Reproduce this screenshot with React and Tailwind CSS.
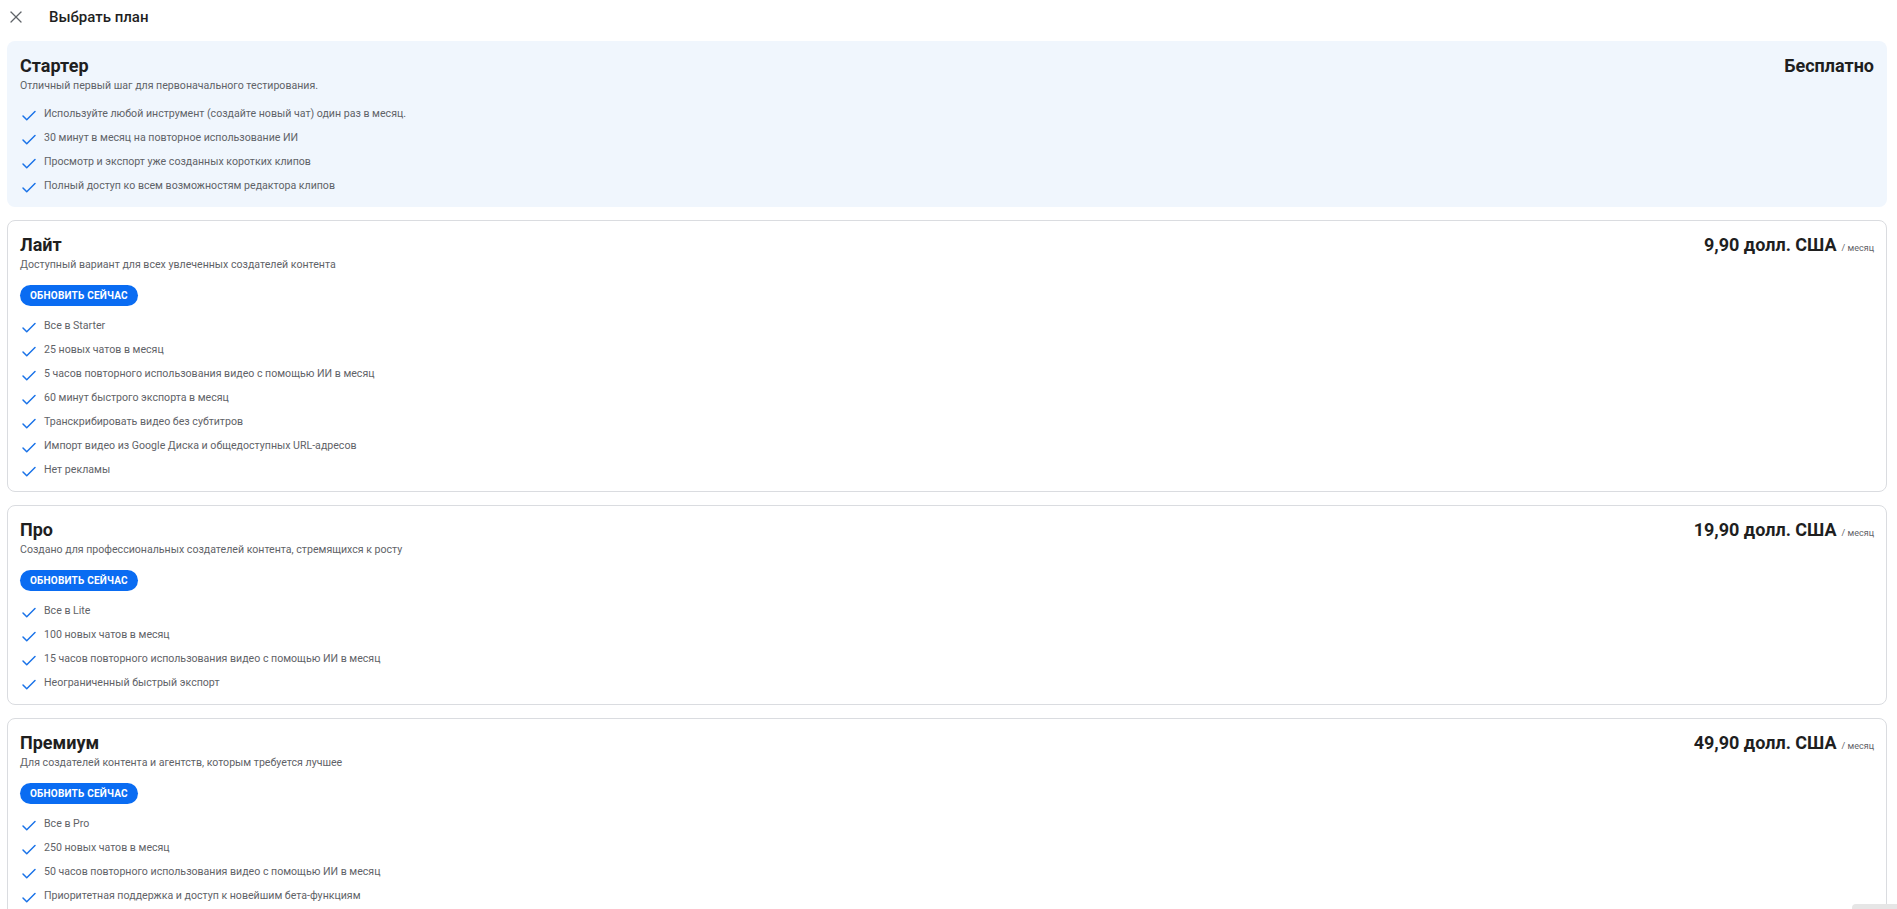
import React from 'react';
import { Check, X } from 'lucide-react';

const plans = [
    {
        name: 'Стартер',
        desc: 'Отличный первый шаг для первоначального тестирования.',
        price: 'Бесплатно',
        free: true,
        features: [
            'Используйте любой инструмент (создайте новый чат) один раз в месяц.',
            '30 минут в месяц на повторное использование ИИ',
            'Просмотр и экспорт уже созданных коротких клипов',
            'Полный доступ ко всем возможностям редактора клипов',
        ],
    },
    {
        name: 'Лайт',
        desc: 'Доступный вариант для всех увлеченных создателей контента',
        price: '9,90 долл. США',
        features: [
            'Все в Starter',
            '25 новых чатов в месяц',
            '5 часов повторного использования видео с помощью ИИ в месяц',
            '60 минут быстрого экспорта в месяц',
            'Транскрибировать видео без субтитров',
            'Импорт видео из Google Диска и общедоступных URL-адресов',
            'Нет рекламы',
        ],
    },
    {
        name: 'Про',
        desc: 'Создано для профессиональных создателей контента, стремящихся к росту',
        price: '19,90 долл. США',
        features: [
            'Все в Lite',
            '100 новых чатов в месяц',
            '15 часов повторного использования видео с помощью ИИ в месяц',
            'Неограниченный быстрый экспорт',
        ],
    },
    {
        name: 'Премиум',
        desc: 'Для создателей контента и агентств, которым требуется лучшее',
        price: '49,90 долл. США',
        features: [
            'Все в Pro',
            '250 новых чатов в месяц',
            '50 часов повторного использования видео с помощью ИИ в месяц',
            'Приоритетная поддержка и доступ к новейшим бета-функциям',
        ],
    },
];

function PlanCard({ plan }) {
    return (
        <div
            className={
                plan.free
                    ? 'rounded-lg border border-transparent bg-[#f0f6fd] px-3 pt-3 pb-2'
                    : 'rounded-lg border border-[#dadce0] bg-white px-3 pt-3 pb-[9px]'
            }
        >
            <div className="flex items-baseline justify-between">
                <h2 className="text-[18px] leading-6 font-bold text-[#1f1f1f]">{plan.name}</h2>
                <div className="flex items-baseline">
                    <span className="text-[18px] leading-6 font-bold text-[#1f1f1f]">{plan.price}</span>
                    {!plan.free && (
                        <span className="ml-[5px] text-[9px] text-[#5f6368]">/ месяц</span>
                    )}
                </div>
            </div>
            <p className="text-[10.6px] leading-4 text-[#5f6368]">{plan.desc}</p>
            {!plan.free && (
                <button className="mt-3 h-[21px] rounded-full bg-[#0a6cf2] px-[10px] text-[10px] font-bold tracking-[0.02em] text-white">
                    ОБНОВИТЬ СЕЙЧАС
                </button>
            )}
            <ul className="mt-2">
                {plan.features.map((f) => (
                    <li key={f} className="flex h-6 items-center gap-[6px]">
                        <Check size={18} strokeWidth={2} className="mt-1 shrink-0 text-[#1a73e8]" />
                        <span className="text-[10.6px] text-[#5f6368]">{f}</span>
                    </li>
                ))}
            </ul>
        </div>
    );
}

export default function App() {
    return (
        <div className="h-[909px] overflow-hidden bg-white font-['Roboto',sans-serif]">
            <div className="flex h-[34px] items-center pl-[6px]">
                <X size={20} strokeWidth={1.5} className="text-[#5f6368]" />
                <h1 className="ml-[23px] text-[15px] font-medium text-[#1f1f1f]">Выбрать план</h1>
            </div>
            <div className="mt-[7px] flex flex-col gap-[13px] pl-[7px] pr-[10px]">
                {plans.map((p) => (
                    <PlanCard key={p.name} plan={p} />
                ))}
            </div>
            <div className="fixed right-0 bottom-0 h-[5px] w-[45px] rounded-tl bg-[#e6e6e6]" />
        </div>
    );
}
